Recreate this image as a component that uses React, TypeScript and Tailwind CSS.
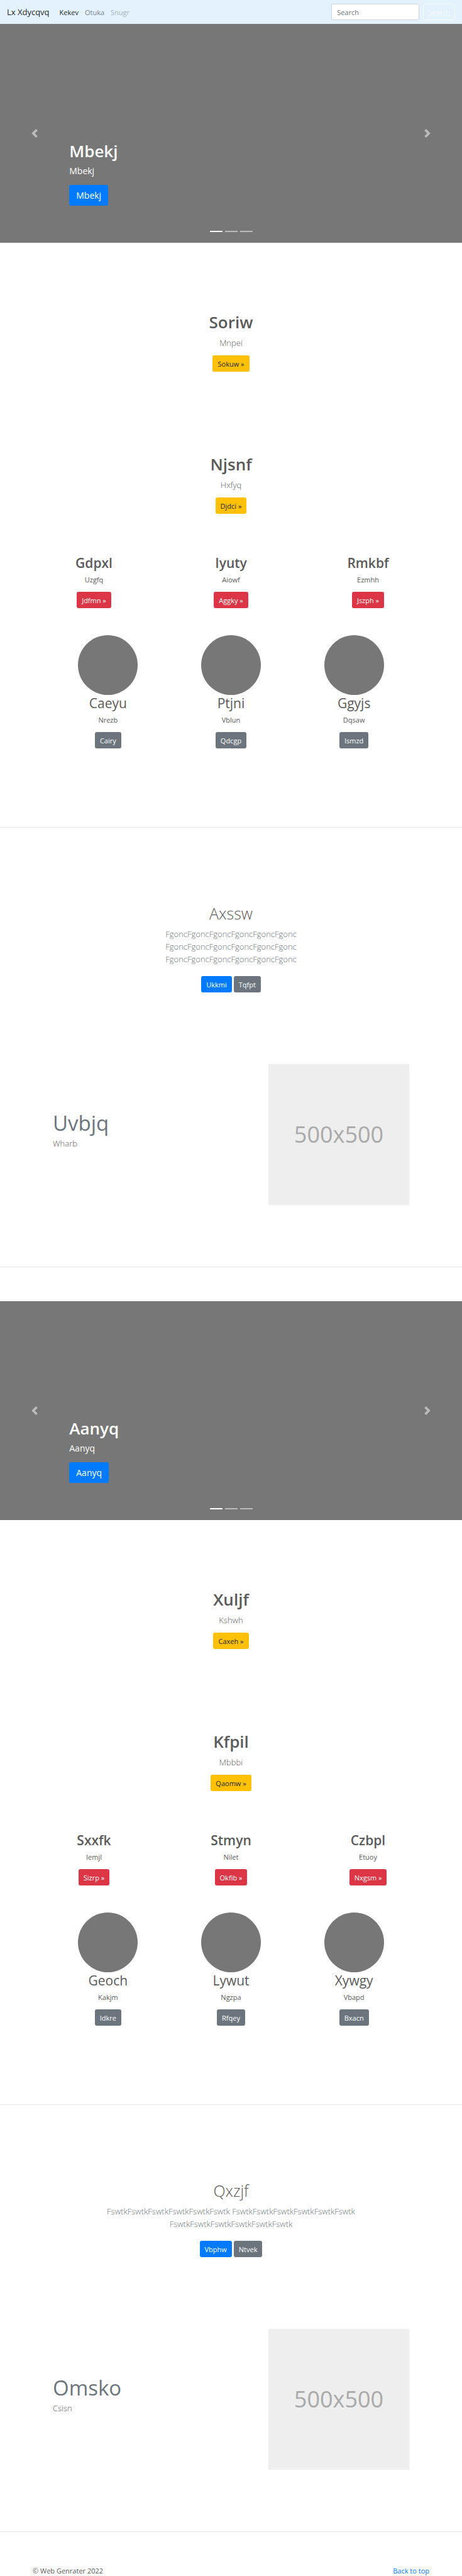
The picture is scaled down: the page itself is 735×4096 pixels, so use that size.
import React from "react";

type Item = { title: string; text: string; action: string };

type SiteBlock = {
  hero: string;
  features: Item[];
  columns: Item[];
  people: Item[];
  intro: { title: string; text: string; primary: string; secondary: string };
  showcase: { title: string; text: string };
};

const blocks: SiteBlock[] = [
  {
    hero: "Mbekj",
    features: [
      { title: "Soriw", text: "Mnpei", action: "Sokuw »" },
      { title: "Njsnf", text: "Hxfyq", action: "Djdci »" },
    ],
    columns: [
      { title: "Gdpxl", text: "Uzgfq", action: "Jdfmn »" },
      { title: "Iyuty", text: "Aiowf", action: "Aggky »" },
      { title: "Rmkbf", text: "Ezmhh", action: "Jszph »" },
    ],
    people: [
      { title: "Caeyu", text: "Nrezb", action: "Cairy" },
      { title: "Ptjni", text: "Vblun", action: "Qdcgp" },
      { title: "Ggyjs", text: "Dqsaw", action: "Ismzd" },
    ],
    intro: {
      title: "Axssw",
      text: "FgoncFgoncFgoncFgoncFgoncFgonc FgoncFgoncFgoncFgoncFgoncFgonc FgoncFgoncFgoncFgoncFgoncFgonc",
      primary: "Ukkmi",
      secondary: "Tqfpt",
    },
    showcase: { title: "Uvbjq", text: "Wharb" },
  },
  {
    hero: "Aanyq",
    features: [
      { title: "Xuljf", text: "Kshwh", action: "Caxeh »" },
      { title: "Kfpil", text: "Mbbbi", action: "Qaomw »" },
    ],
    columns: [
      { title: "Sxxfk", text: "Iemjl", action: "Sizrp »" },
      { title: "Stmyn", text: "Nilet", action: "Okfib »" },
      { title: "Czbpl", text: "Etuoy", action: "Nxgsm »" },
    ],
    people: [
      { title: "Geoch", text: "Kakjm", action: "Idkre" },
      { title: "Lywut", text: "Ngzpa", action: "Rfqey" },
      { title: "Xywgy", text: "Vbapd", action: "Bxacn" },
    ],
    intro: {
      title: "Qxzjf",
      text: "FswtkFswtkFswtkFswtkFswtkFswtk FswtkFswtkFswtkFswtkFswtkFswtk FswtkFswtkFswtkFswtkFswtkFswtk",
      primary: "Vbphw",
      secondary: "Ntvek",
    },
    showcase: { title: "Omsko", text: "Csisn" },
  },
];

const tones = {
  primary: "bg-[#007bff] text-white",
  secondary: "bg-[#6c757d] text-white",
  danger: "bg-[#dc3545] text-white",
  warning: "bg-[#ffc107] text-[#212529]",
};

function LinkButton({ tone, children }: { tone: keyof typeof tones; children: React.ReactNode }) {
  return (
    <a href="#" className={`inline-flex h-[26px] items-center rounded-[3px] px-[8px] text-[11px] leading-[17px] ${tones[tone]}`}>
      {children}
    </a>
  );
}

function Navbar() {
  return (
    <nav className="flex h-[38px] items-center justify-between bg-[#e3f2fd] px-[11px]">
      <div className="flex items-center">
        <a href="#" className="mr-[16px] text-[13px] leading-[20px] text-black/90">Lx Xdycqvq</a>
        <ul className="flex gap-[10px] text-[11px] leading-[17px]">
          <li><a href="#" className="text-black/90">Kekev</a></li>
          <li><a href="#" className="text-black/50">Otuka</a></li>
          <li><a href="#" className="text-black/30">Snugr</a></li>
        </ul>
      </div>
      <form className="flex gap-[6px]">
        <input
          type="search"
          aria-label="Search"
          placeholder="Search"
          className="h-[26px] w-[140px] rounded-[3px] border border-[#ced4da] bg-white px-[8px] text-[11px] placeholder:text-[#6c757d]"
        />
        <button type="button" className="h-[26px] rounded-[3px] border border-[#f8f9fa] px-[7px] text-[11px] leading-[17px] text-[#f8f9fa]">
          Search
        </button>
      </form>
    </nav>
  );
}

function Hero({ label }: { label: string }) {
  return (
    <section className="relative flex h-[348px] flex-col items-start justify-end bg-[#777] px-[15%] pb-[59px] text-white">
      <h1 className="text-[26px] font-semibold leading-[33px]">{label}</h1>
      <p className="mt-[5px] text-[14px] leading-[20px]">{label}</p>
      <a href="#" className="mt-[12px] inline-flex h-[33px] items-center rounded-[3px] bg-[#007bff] px-[11px] text-[14px] leading-[20px]">
        {label}
      </a>
      <button type="button" aria-label="Previous" className="absolute inset-y-0 left-0 flex w-[15%] items-center justify-center opacity-50">
        <svg viewBox="0 0 8 8" className="size-[14px] fill-white">
          <path d="M5.25 0l-4 4 4 4 1.5-1.5-2.5-2.5 2.5-2.5-1.5-1.5z" />
        </svg>
      </button>
      <button type="button" aria-label="Next" className="absolute inset-y-0 right-0 flex w-[15%] items-center justify-center opacity-50">
        <svg viewBox="0 0 8 8" className="size-[14px] fill-white">
          <path d="M2.75 0l-1.5 1.5 2.5 2.5-2.5 2.5 1.5 1.5 4-4-4-4z" />
        </svg>
      </button>
      <div className="absolute inset-x-0 bottom-[17px] flex justify-center gap-[4px]">
        <span className="h-[2px] w-[20px] bg-white" />
        <span className="h-[2px] w-[20px] bg-white/50" />
        <span className="h-[2px] w-[20px] bg-white/50" />
      </div>
    </section>
  );
}

function Feature({ item }: { item: Item }) {
  return (
    <section className="flex flex-col items-center">
      <h2 className="text-[26px] font-semibold leading-[33px]">{item.title}</h2>
      <p className="mt-[6px] mb-[10px] text-[13px] font-light leading-[20px]">{item.text}</p>
      <LinkButton tone="warning">{item.action}</LinkButton>
    </section>
  );
}

function Block({ block }: { block: SiteBlock }) {
  return (
    <>
      <Hero label={block.hero} />
      <div className="flex flex-col gap-[131px] pt-[110px]">
        {block.features.map((item) => (
          <Feature key={item.title} item={item} />
        ))}
      </div>
      <div className="mx-auto mt-[65px] grid max-w-[654px] grid-cols-3">
        {block.columns.map((item) => (
          <div key={item.title} className="flex flex-col items-center">
            <h3 className="text-[21px] font-semibold leading-[26px]">{item.title}</h3>
            <p className="mt-[5px] mb-[11px] text-[11px] leading-[17px]">{item.text}</p>
            <LinkButton tone="danger">{item.action}</LinkButton>
          </div>
        ))}
      </div>
      <div className="mx-auto mt-[43px] mb-[125px] grid max-w-[587px] grid-cols-3">
        {block.people.map((item) => (
          <div key={item.title} className="flex flex-col items-center">
            <div className="size-[95px] rounded-full bg-[#777]" />
            <h3 className="text-[21px] leading-[26px]">{item.title}</h3>
            <p className="mt-[5px] mb-[11px] text-[11px] leading-[17px]">{item.text}</p>
            <LinkButton tone="secondary">{item.action}</LinkButton>
          </div>
        ))}
      </div>
      <hr className="border-t border-[#e5e5e5]" />
      <section className="mx-auto mt-[120px] flex max-w-[410px] flex-col items-center text-center">
        <h2 className="text-[25px] font-light leading-[33px]">{block.intro.title}</h2>
        <p className="mt-[6px] mb-[17px] text-[13px] font-light leading-[20px] text-[#6c757d]">{block.intro.text}</p>
        <div className="flex gap-[3px]">
          <LinkButton tone="primary">{block.intro.primary}</LinkButton>
          <LinkButton tone="secondary">{block.intro.secondary}</LinkButton>
        </div>
      </section>
      <section className="mt-[114px] mb-[98px] flex items-center justify-between px-[84px]">
        <div className="pb-[16px]">
          <h2 className="text-[33px] leading-[41px] text-[#6c757d]">{block.showcase.title}</h2>
          <p className="mt-[2px] text-[13px] font-light leading-[20px]">{block.showcase.text}</p>
        </div>
        <div className="flex size-[224px] items-center justify-center bg-[#eee] text-[36px] text-[#aaa]">500x500</div>
      </section>
      <hr className="border-t border-[#e5e5e5]" />
    </>
  );
}

export default function App() {
  return (
    <div className="bg-white font-['Open_Sans','Noto_Sans',sans-serif] text-[#5a5a5a]">
      <Navbar />
      <main className="flex flex-col gap-[54px]">
        {blocks.map((block) => (
          <div key={block.hero}>
            <Block block={block} />
          </div>
        ))}
      </main>
      <footer className="mt-[53px] flex justify-between px-[52px] text-[11px] leading-[17px]">
        <p>© Web Genrater 2022</p>
        <a href="#" className="text-[#007bff]">Back to top</a>
      </footer>
    </div>
  );
}
